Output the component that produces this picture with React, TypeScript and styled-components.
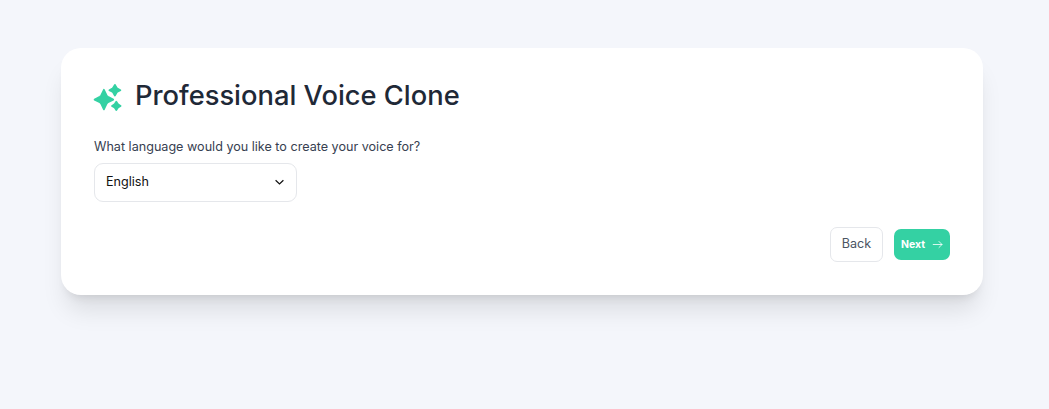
import React from "react";
import styled, { createGlobalStyle } from "styled-components";

const Global = createGlobalStyle`
  * { box-sizing: border-box; }
  body { margin: 0; background: #f4f6fb; font-family: Inter, "Liberation Sans", sans-serif; color: #1f2937; }
`;
const Page = styled.main`
  min-height: 409px;
  padding: 48px 66px 0 61px;
`;
const Card = styled.section`
  height: 247px;
  padding: 32px 33px 33px;
  border-radius: 20px;
  background: #fff;
  box-shadow: 0 20px 25px -5px rgba(0, 0, 0, 0.1), 0 8px 10px -6px rgba(0, 0, 0, 0.1);
  display: flex;
  flex-direction: column;
  align-items: flex-start;
`;
const Header = styled.header`
  display: flex;
  align-items: center;
  gap: 13px;
  height: 32px;
`;
const Title = styled.h1`
  margin: 0;
  font-size: 27.3px;
  line-height: 32px;
  font-weight: 500;
`;
const Sparkles = styled.svg`
  width: 28px;
  height: 28px;
  margin-top: 2px;
  overflow: visible;
`;
const Label = styled.label`
  margin-top: 24px;
  font-size: 12.6px;
  line-height: 21px;
  font-weight: 400;
  color: #374151;
`;
const Select = styled.button`
  margin-top: 6px;
  width: 203px;
  height: 39px;
  padding: 0 11px 2px;
  display: flex;
  align-items: center;
  justify-content: space-between;
  border: 1px solid #e5e7eb;
  border-radius: 9px;
  background: #fff;
  color: #111;
  font: 12.6px Inter, sans-serif;
`;
const Actions = styled.footer`
  margin-top: 25px;
  align-self: flex-end;
  display: flex;
  align-items: center;
  gap: 11px;
`;
const Button = styled.button<{ $primary?: boolean }>`
  width: ${(p) => (p.$primary ? 56 : 53)}px;
  height: ${(p) => (p.$primary ? 31 : 35)}px;
  padding: ${(p) => (p.$primary ? "0" : "0 0 2px")};
  display: flex;
  align-items: center;
  justify-content: center;
  gap: 7px;
  border: ${(p) => (p.$primary ? "0" : "1px solid #e5e7eb")};
  border-radius: 7px;
  background: ${(p) => (p.$primary ? "#34d1a3" : "#fff")};
  color: ${(p) => (p.$primary ? "#fff" : "#4b5563")};
  font: ${(p) => (p.$primary ? "700 10.5px" : "400 12.6px")} Inter, sans-serif;
`;

export default function App() {
  return (
    <Page>
      <Global />
      <Card>
        <Header>
          <Sparkles viewBox="0 0 28 28" fill="#34d1a3" stroke="#34d1a3" strokeWidth="1.8" strokeLinejoin="round">
            <path d="M9.9 6.8 12.6 12.5Q13.1 13.4 14 13.9L19.2 16.6 14 19.3Q13.1 19.8 12.6 20.7L9.9 26.4 7.2 20.7Q6.7 19.8 5.8 19.3L.6 16.6 5.8 13.9Q6.7 13.4 7.2 12.5Z" />
            <path d="M20.9 1.9 22.6 4.8Q22.9 5.3 23.4 5.6L26.4 7.2 23.4 8.8Q22.9 9.1 22.6 9.6L20.9 12.5 19.2 9.6Q18.9 9.1 18.4 8.8L15.4 7.2 18.4 5.6Q18.9 5.3 19.2 4.8Z" />
            <path d="M22.3 18.7 23.6 20.8Q23.9 21.3 24.4 21.6L26.6 22.9 24.4 24.2Q23.9 24.5 23.6 25L22.3 27.1 21 25Q20.7 24.5 20.2 24.2L18 22.9 20.2 21.6Q20.7 21.3 21 20.8Z" />
          </Sparkles>
          <Title>Professional Voice Clone</Title>
        </Header>
        <Label>What language would you like to create your voice for?</Label>
        <Select>
          English
          <svg width="11" height="11" viewBox="0 0 11 11" fill="none" stroke="#111" strokeWidth="1.2"><path d="M1.6 4.3 5.5 8 9.4 4.3" /></svg>
        </Select>
        <Actions>
          <Button>Back</Button>
          <Button $primary>
            Next
            <svg width="11" height="11" viewBox="0 0 11 11" fill="none" stroke="#fff" strokeWidth=".8" strokeLinecap="round" strokeLinejoin="round"><path d="M1.2 5.5h8.8M7 2.5l3 3-3 3" /></svg>
          </Button>
        </Actions>
      </Card>
    </Page>
  );
}
